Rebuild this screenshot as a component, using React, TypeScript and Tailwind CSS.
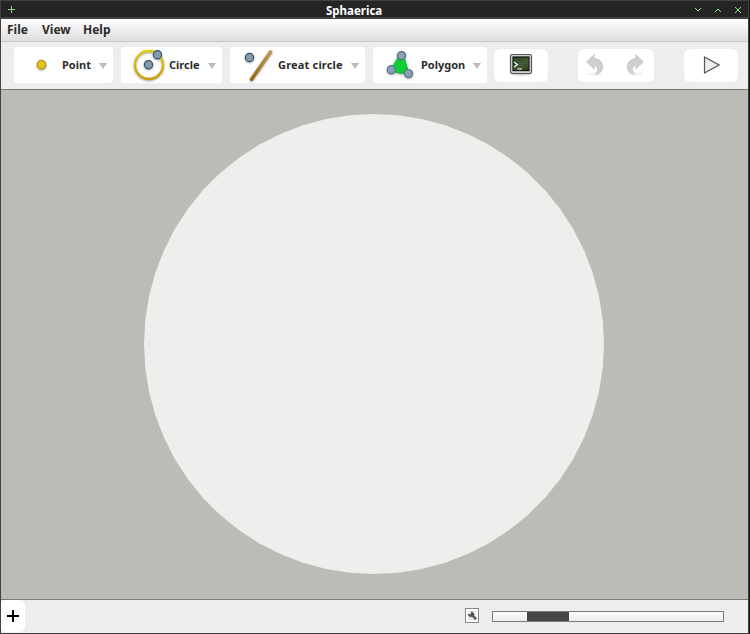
import type { ReactNode } from 'react';

const label = 'block whitespace-nowrap font-bold text-[#2b2b2b]';

function Arrow({ className }: { className: string }) {
  return (
    <svg className={`shrink-0 ${className}`} width="8" height="6" viewBox="0 0 8 6">
      <path d="M0 0H8L4 6Z" fill="#bcbcbc" />
    </svg>
  );
}

function ToolButton({ className, icon, text, textClass }: { className: string; icon: ReactNode; text: string; textClass: string }) {
  return (
    <button className={`flex h-9 shrink-0 items-center rounded-[3px] bg-white ${className}`}>
      {icon}
      <span className={`${label} mb-[2px] shrink-0 text-left text-[11px] leading-[15px] ${textClass}`}>{text}</span>
      <Arrow className="mt-px" />
    </button>
  );
}

function Dot({ x, y }: { x: number; y: number }) {
  return <circle cx={x} cy={y} r="4.1" fill="#859cae" stroke="#30536d" strokeWidth="1.2" />;
}

function Shadow() {
  return (
    <filter id="soft" x="-30%" y="-30%" width="160%" height="170%" colorInterpolationFilters="sRGB">
      <feDropShadow dx="0" dy="1" stdDeviation="1" floodColor="#000" floodOpacity="0.35" />
    </filter>
  );
}

function PointIcon() {
  return (
    <svg className="shrink-0" width="48" height="36" viewBox="0 0 48 36">
      <defs><Shadow /></defs>
      <circle cx="27.5" cy="17.7" r="4.3" fill="#e0c418" stroke="#c08f22" strokeWidth="1.2" filter="url(#soft)" />
    </svg>
  );
}

function CircleIcon() {
  return (
    <svg className="shrink-0" width="48" height="36" viewBox="0 0 48 36">
      <defs>
        <linearGradient id="ring" x1="0" y1="0" x2="0" y2="1">
          <stop offset="0" stopColor="#e2cb18" />
          <stop offset="1" stopColor="#cf9c00" />
        </linearGradient>
      </defs>
      <g filter="url(#soft)">
        <circle cx="28" cy="18" r="14" fill="none" stroke="url(#ring)" strokeWidth="2.3" />
        <Dot x={27.5} y={17.7} />
        <Dot x={36.5} y={7.8} />
      </g>
    </svg>
  );
}

function GreatCircleIcon() {
  return (
    <svg className="shrink-0" width="48" height="36" viewBox="0 0 48 36">
      <defs>
        <linearGradient id="wood" x1="0" y1="0" x2="0" y2="1">
          <stop offset="0" stopColor="#b99a55" />
          <stop offset="1" stopColor="#966b18" />
        </linearGradient>
      </defs>
      <g filter="url(#soft)">
        <path d="M21.6 32.3L40.5 5" stroke="url(#wood)" strokeWidth="3.6" strokeLinecap="round" />
        <Dot x={19.5} y={10.5} />
      </g>
    </svg>
  );
}

function PolygonIcon() {
  return (
    <svg className="shrink-0" width="48" height="36" viewBox="0 0 48 36">
      <g filter="url(#soft)">
        <path d="M25.5 9.5L31 9.5L35.5 25L28 26.5L18.5 24L20.5 18Z" fill="#0ccf35" stroke="#07b62b" strokeWidth="0.8" />
        <g stroke="#52708a" strokeWidth="1.2" fill="#8ba1b0">
          <circle cx="28.5" cy="8.6" r="4" />
          <circle cx="18.3" cy="22.7" r="4" />
          <circle cx="35.5" cy="26.5" r="4" />
        </g>
      </g>
    </svg>
  );
}

function TerminalIcon() {
  return (
    <svg className="mb-[2px]" width="24" height="24" viewBox="0 0 24 24">
      <defs>
        <linearGradient id="screen" x1="0" y1="0" x2="1" y2="1">
          <stop offset="0" stopColor="#273b1e" />
          <stop offset="0.55" stopColor="#3d542f" />
          <stop offset="1" stopColor="#26391d" />
        </linearGradient>
      </defs>
      <ellipse cx="12" cy="21.5" rx="10" ry="1.2" fill="#d2d2d2" />
      <rect x="1.5" y="1.5" width="21" height="19" rx="1.5" fill="#b9bab5" stroke="#555753" strokeWidth="1.2" />
      <rect x="2.6" y="2.6" width="18.8" height="16.8" rx="0.5" fill="none" stroke="#e4e4e0" strokeWidth="0.6" />
      <rect x="4" y="4" width="16" height="13.5" fill="url(#screen)" stroke="#171b16" strokeWidth="1.1" />
      <path d="M4.5 6.5H19.5M4.5 8.5H19.5M4.5 10.5H19.5M4.5 12.5H19.5M4.5 14.5H19.5" stroke="#7b906c" strokeOpacity="0.3" strokeWidth="0.7" />
      <path d="M5 9L8.5 11.5L5 14M8.5 16H13" fill="none" stroke="#f3fff0" strokeWidth="1.1" />
    </svg>
  );
}

function HistoryIcon({ redo = false }: { redo?: boolean }) {
  return (
    <svg className={redo ? '-scale-x-100' : ''} width="18" height="22" viewBox="0 0 18 22">
      <ellipse cx="9" cy="19.8" rx="8" ry="1.6" fill="#f2f2f2" />
      <path d="M8.2 0.4V4.6C14.4 5 16.8 9 16.8 13C16.8 17.4 13.2 20.2 8.8 20.3C12.2 18.2 12.8 12 8.2 11.6V15L0.6 8Z" fill="#cfcfcf" stroke="#bebebe" strokeWidth="0.6" />
    </svg>
  );
}

function Sphere() {
  const points = Array.from({ length: 60 }, (_, i) => {
    const angle = (i * Math.PI) / 30;
    return `${230 + 230 * Math.cos(angle)},${230 + 230 * Math.sin(angle)}`;
  }).join(' ');
  return (
    <svg width="460" height="460" viewBox="0 0 460 460">
      <polygon points={points} fill="#eeeeec" />
    </svg>
  );
}

function TitleBar() {
  return (
    <header className="flex h-[18px] shrink-0 items-start border-b-2 border-[#414141] bg-[#242424]">
      <svg className="mt-[5px] ml-[7px] shrink-0" width="7" height="7" viewBox="0 0 7 7" shapeRendering="crispEdges">
        <path d="M3.5 0V7M0 3.5H7" stroke="#83d883" />
      </svg>
      <span className="mt-[2px] ml-[311px] text-[11.5px] leading-4 font-bold text-white">Sphaerica</span>
      <svg className="mt-[5px] mr-[6px] ml-auto" width="47" height="8" viewBox="0 0 47 8" fill="#83ee83" shapeRendering="crispEdges">
        <path d="M0 2h1v1h-1zM1 3h1v1h-1zM2 4h1v1h-1zM3 4h1v1h-1zM4 3h1v1h-1zM5 2h1v1h-1z" />
        <path d="M20 5h1v1h-1zM21 4h1v1h-1zM22 3h1v1h-1zM23 3h1v1h-1zM24 4h1v1h-1zM25 5h1v1h-1z" />
        <path d="M40 1h1v1h-1zM41 2h1v1h-1zM42 3h2v2h-2zM44 2h1v1h-1zM45 1h1v1h-1zM41 5h1v1h-1zM40 6h1v1h-1zM44 5h1v1h-1zM45 6h1v1h-1z" />
      </svg>
    </header>
  );
}

export default function App() {
  return (
    <div className="h-[634px] w-[750px] overflow-hidden bg-[#111416] pr-px font-['Noto_Sans','Open_Sans',sans-serif]">
      <div className="flex h-[634px] w-[749px] flex-col border border-[#414141] bg-[#ededed]">
        <TitleBar />
        <nav className="flex h-[23px] shrink-0 items-start gap-[13px] border-b border-[#c8c8c8] bg-gradient-to-b from-white to-[#dedede] pt-[2px] pl-[6px] text-[12px] leading-[17px]">
          <span className={`${label} w-[22px]`}>File</span>
          <span className={`${label} w-[28px]`}>View</span>
          <span className={label}>Help</span>
        </nav>
        <div className="flex h-12 shrink-0 items-start border-b border-[#797b78] pt-[5px] pl-[13px]">
          <ToolButton className="w-[99px]" icon={<PointIcon />} text="Point" textClass="w-[37px]" />
          <ToolButton className="ml-2 w-[101px]" icon={<CircleIcon />} text="Circle" textClass="w-[39px]" />
          <ToolButton className="ml-2 w-[135px]" icon={<GreatCircleIcon />} text="Great circle" textClass="w-[73px] tracking-[0.18px]" />
          <ToolButton className="ml-2 w-[114px]" icon={<PolygonIcon />} text="Polygon" textClass="w-[52px]" />
          <button className="mt-[2px] ml-[7px] flex h-[33px] w-[54px] items-center justify-center rounded-[6px] bg-white">
            <TerminalIcon />
          </button>
          <div className="mt-[2px] ml-[30px] flex h-[33px] w-[76px] items-center justify-between rounded-[6px] bg-white pr-[10px] pb-[2px] pl-[8px]">
            <HistoryIcon />
            <HistoryIcon redo />
          </div>
          <button className="mt-[2px] ml-[30px] flex h-[33px] w-[54px] items-center justify-center rounded-[6px] bg-white pb-px">
            <svg width="18" height="20" viewBox="0 0 18 20">
              <path d="M2.5 2L17 10L2.5 18Z" fill="#ededeb" stroke="#555753" strokeWidth="1.2" />
            </svg>
          </button>
        </div>
        <main className="flex h-[509px] shrink-0 justify-center bg-[#babdb6] pt-6 pr-px">
          <Sphere />
        </main>
        <footer className="flex h-[34px] shrink-0 items-start border-t border-[#797b78]">
          <button className="flex h-8 w-6 items-center justify-center rounded-[5px] bg-white">
            <svg width="12" height="12" viewBox="0 0 12 12" shapeRendering="crispEdges">
              <path d="M6 0V12M0 6H12" stroke="#000" strokeWidth="2" />
            </svg>
          </button>
          <button className="mt-2 ml-[440px] flex h-[15px] w-[14px] items-center justify-center border border-[#888] bg-white">
            <svg width="12" height="13" viewBox="0 0 12 13">
              <path d="M2 2.5H10M2 5.5H10M2 8.5H10M2 10.5H9" stroke="#d8d8d8" />
              <path d="M5 3L5.2 4.8L3.8 5.6L2.2 4.8C1.8 7.2 3.8 8.4 6 7.6L9.2 10.8L10.8 9.4L8 6.6C8.6 4.4 7.2 2.8 5 3Z" fill="#555" stroke="#555" strokeWidth="0.5" />
            </svg>
          </button>
          <div className="mt-[11px] ml-[13px] h-[11px] w-[232px] border border-[#7c7c7c] bg-gradient-to-b from-white to-[#ececec]">
            <div className="ml-[34px] h-[9px] w-[42px] bg-[#464646]" />
          </div>
        </footer>
      </div>
    </div>
  );
}
